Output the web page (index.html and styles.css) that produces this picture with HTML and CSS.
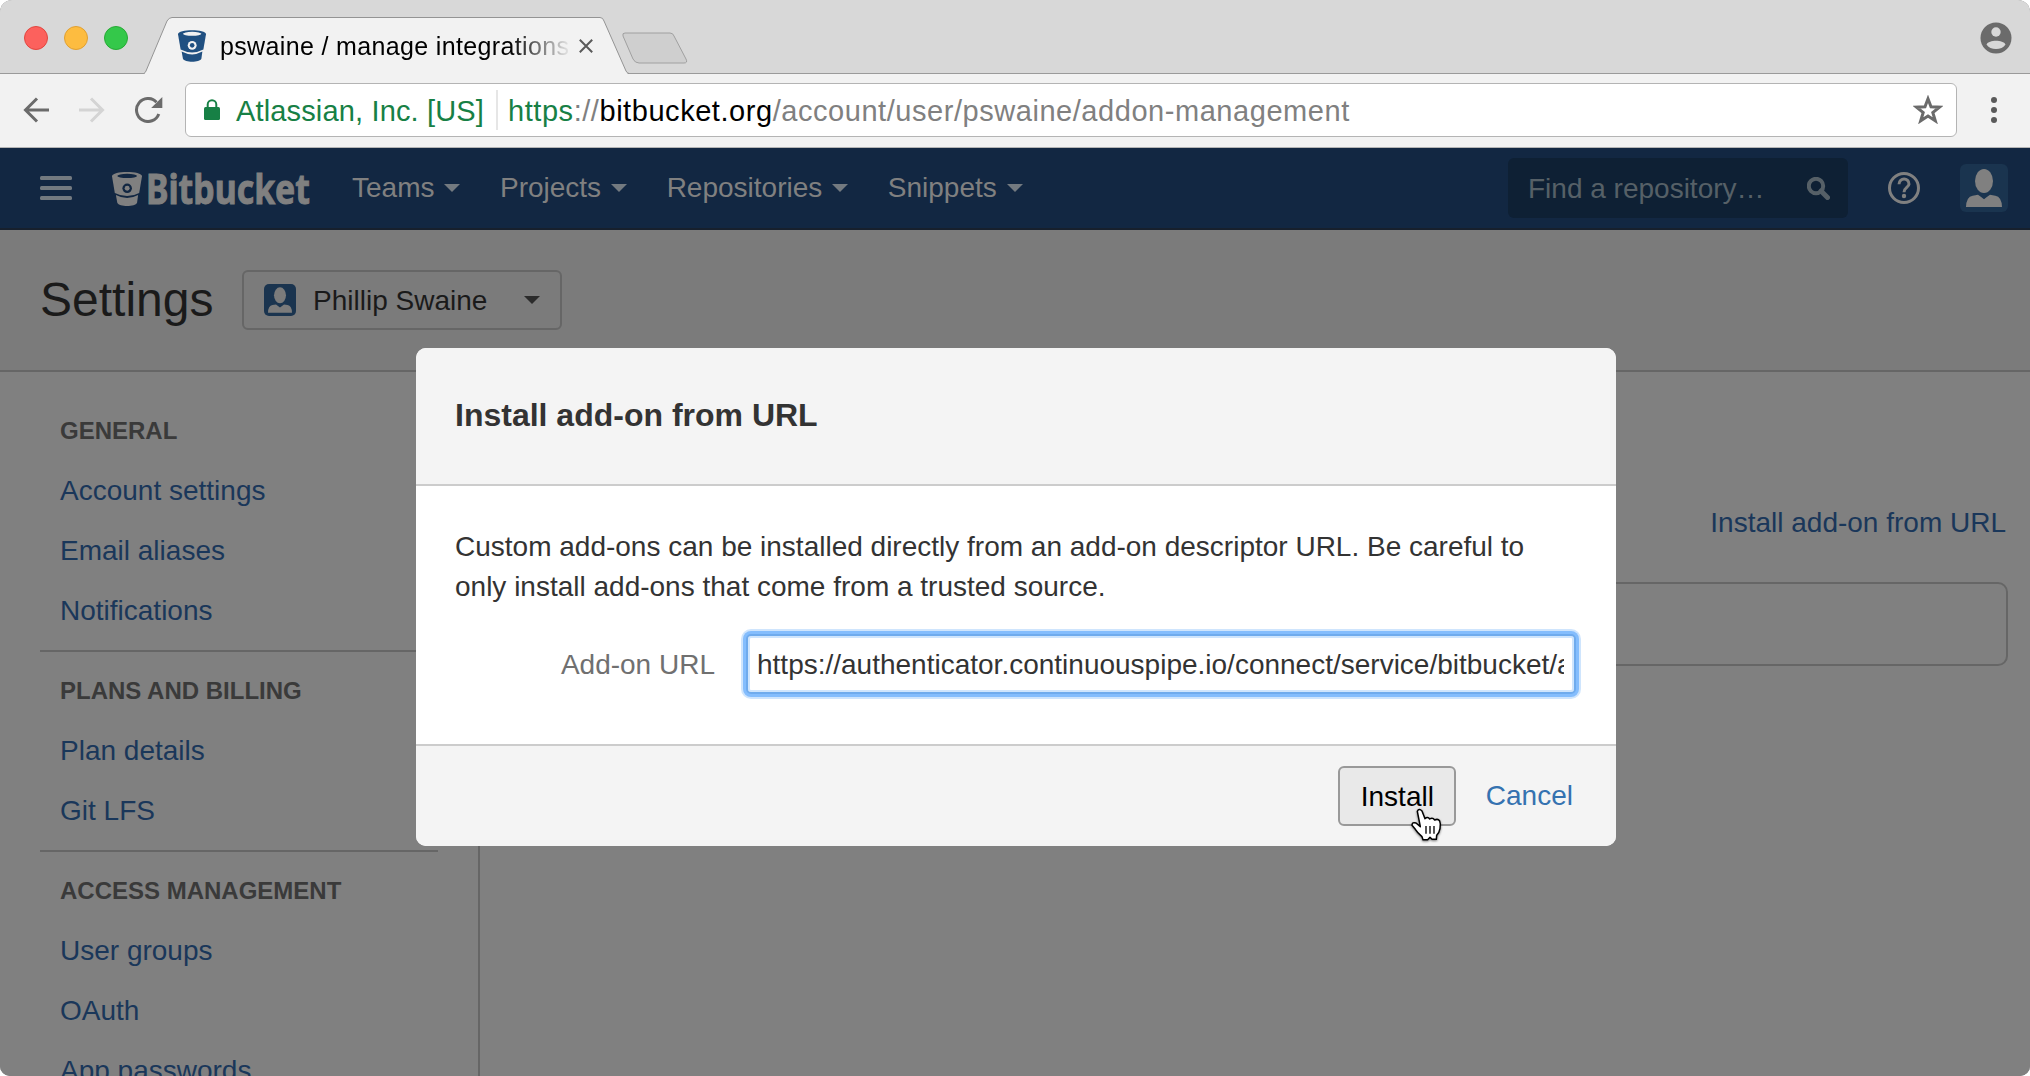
FILE: index.html
```html
<!DOCTYPE html>
<html lang="en">
<head>
<meta charset="utf-8">
<title>pswaine / manage integrations</title>
<link rel="stylesheet" href="styles.css">
</head>
<body>
<svg class="defs" aria-hidden="true">
  <symbol id="bucket" viewBox="0 0 85 96">
    <path fill="currentColor" d="M0 12C0-4 85-4 85 12L77 59Q43 77 8 59Z"/>
    <path fill="currentColor" d="M11 65Q43 82 74 65L71 87C66 99 20 99 15 87Z"/>
    <ellipse class="hole" cx="43" cy="11" rx="28" ry="6"/>
    <circle class="hole" cx="43" cy="46" r="13.5"/>
    <circle fill="currentColor" cx="43" cy="46" r="7"/>
  </symbol>
  <symbol id="person" viewBox="0 0 144 144">
    <ellipse fill="currentColor" cx="72" cy="51" rx="27" ry="36"/>
    <path fill="currentColor" d="M18 129Q19 98 38 95L54 92Q63 98 72 106Q81 98 90 92L106 95Q125 98 126 129Z"/>
  </symbol>
</svg>
<div class="window">
  <header class="tabstrip">
    <div class="lights"><i class="light red"></i><i class="light yellow"></i><i class="light green"></i></div>
    <div class="tab">
      <svg class="tab-shape" width="486" height="58" viewBox="0 0 486 58"><path class="tab-fill" d="M0 57Q1 56 2 54L23 4Q25 .5 28 .5H456Q459 .5 460 4L482 54Q483 56 484 57V58H0Z"/><path class="tab-line" d="M0 56.5Q1 56 2 54L23 4Q25 .5 28 .5H456Q459 .5 460 4L482 54Q483 56 485 56.5"/></svg>
      <svg class="favicon"><use href="#bucket"/></svg>
      <span class="tab-title">pswaine / manage integrations</span>
      <svg class="tab-close" width="14" height="14" viewBox="0 0 14 14"><path d="M.8.8 13.2 13.2M13.2.8.8 13.2"/></svg>
    </div>
    <svg class="new-tab" width="68" height="33" viewBox="0 0 68 33"><path d="M4 1H49Q52 1 53 4L65 27Q67 31 63 31H18Q14 31 12 27L2 4Q1 1 4 1Z"/></svg>
    <svg class="profile" width="32" height="32" viewBox="0 0 32 32"><circle cx="16" cy="16" r="15.5" fill="#6b6b6b"/><circle cx="16" cy="10" r="4.7" fill="#d8d8d8"/><path d="M6.5 22.5C9 17.5 23 17.5 25.5 22.5C22 28.5 10 28.5 6.5 22.5Z" fill="#d8d8d8"/></svg>
  </header>

  <div class="toolbar">
    <svg class="tool" width="26" height="26" viewBox="0 0 26 26"><path d="M26 13H3M14 1.5 2.5 13 14 24.5" stroke="#6b6b6b"/></svg>
    <svg class="tool" width="26" height="26" viewBox="0 0 26 26"><path d="M0 13H23M12 1.5 23.5 13 12 24.5" stroke="#d4d4d4"/></svg>
    <svg class="tool reload" width="28" height="26" viewBox="0 0 28 26"><path d="M23.8 17A11.5 11.5 0 1 1 21.5 5.2" stroke="#6b6b6b"/><path d="M27.3 0V11H16.2Z" fill="#6b6b6b"/></svg>
    <div class="omnibox">
      <svg class="lock" width="16" height="21" viewBox="0 0 16 21"><rect y="8" width="16" height="13" rx="1.5" fill="#178045"/><path d="M3.7 9V5.5a4.3 4.3 0 0 1 8.600 0V9" fill="none" stroke="#178045" stroke-width="2"/></svg>
      <span class="issuer">Atlassian, Inc. [US]</span>
      <span class="url"><b class="scheme">https</b>://<b class="host">bitbucket.org</b>/account/user/pswaine/addon-management</span>
      <svg class="star" width="30" height="29" viewBox="0 0 30 29"><path d="M15 3.8 18 11.8 26.5 12.2 19.8 17.5 22.3 25.8 15 21 7.7 25.8 10.2 17.5 3.5 12.2 12 11.8Z"/></svg>
    </div>
    <svg class="menu" width="6" height="26" viewBox="0 0 6 26"><circle cx="3" cy="3" r="3"/><circle cx="3" cy="13" r="3"/><circle cx="3" cy="23" r="3"/></svg>
  </div>

  <main class="page">
    <nav class="nav">
      <svg class="burger" width="32" height="24" viewBox="0 0 32 24"><rect width="32" height="4" rx="1.5"/><rect y="10" width="32" height="4" rx="1.5"/><rect y="20" width="32" height="4" rx="1.5"/></svg>
      <a class="logo"><svg class="logo-mark"><use href="#bucket"/></svg><svg class="logo-word" width="164" height="60" viewBox="0 0 164 60"><text x="-2" y="46" textLength="164" lengthAdjust="spacingAndGlyphs">Bitbucket</text></svg></a>
      <ul class="nav-links">
        <li>Teams<i class="caret"></i></li>
        <li>Projects<i class="caret"></i></li>
        <li>Repositories<i class="caret"></i></li>
        <li>Snippets<i class="caret"></i></li>
      </ul>
      <div class="search"><span>Find a repository…</span><svg width="23" height="23" viewBox="0 0 23 23"><circle cx="9" cy="9" r="7.2"/><path d="M14 14 20.5 20.5"/></svg></div>
      <svg class="help" width="32" height="32" viewBox="0 0 32 32"><circle cx="16" cy="16" r="14.5"/><path d="M11 12.2C11 5.3 21.3 5.5 21 12.2C20.7 15.5 16 15.7 16 20.2"/><circle class="dot" cx="16" cy="24" r="2.2"/></svg>
      <svg class="avatar"><use href="#person"/></svg>
    </nav>

    <div class="page-head">
      <h1>Settings</h1>
      <div class="account"><svg class="account-icon"><use href="#person"/></svg><span>Phillip Swaine</span><i class="caret"></i></div>
    </div>

    <div class="columns">
      <aside class="sidebar">
        <section><h2>GENERAL</h2><a>Account settings</a><a>Email aliases</a><a>Notifications</a></section>
        <section><h2>PLANS AND BILLING</h2><a>Plan details</a><a>Git LFS</a></section>
        <section><h2>ACCESS MANAGEMENT</h2><a>User groups</a><a>OAuth</a><a>App passwords</a></section>
      </aside>
      <div class="content">
        <a class="install-link">Install add-on from URL</a>
        <div class="panel"></div>
      </div>
    </div>
  </main>

  <div class="dialog">
    <h2 class="dialog-title">Install add-on from URL</h2>
    <div class="dialog-body">
      <p>Custom add-ons can be installed directly from an add-on descriptor URL. Be careful to only install add-ons that come from a trusted source.</p>
      <div class="field"><label for="addon-url">Add-on URL</label><input id="addon-url" type="text" value="https://authenticator.continuouspipe.io/connect/service/bitbucket/addon"></div>
    </div>
    <div class="dialog-foot"><button type="button">Install</button><a>Cancel</a></div>
  </div>

  <svg class="cursor" width="50" height="50" viewBox="0 0 150 150">
    <path class="hand" d="M52 34Q57 24 66 33L75 56Q83 48 89 57Q98 51 104 60Q114 55 119 63Q123 72 120 86Q118 98 110 106L109 118H96L90 112L83 119H69L66 110Q52 98 46 88L36 76Q36 65 48 69L61 80Z"/>
    <path class="creases" d="M78 78V101M90 78V101M102 78V101"/>
  </svg>
</div>
</body>
</html>
```
FILE: styles.css
```css
* { box-sizing: border-box; }
body { margin: 0; background: #fff; font-family: "Liberation Sans", Arial, sans-serif; font-size: 28px; }
h1, h2, p, ul { margin: 0; padding: 0; }
svg { display: block; flex: none; }
.defs { position: absolute; width: 0; height: 0; }
.hole { fill: var(--hole); }

.window { position: relative; width: 2030px; height: 1076px; display: flex; flex-direction: column; overflow: hidden; border-radius: 12px 12px 10px 10px; background: #808080; }

/* Browser chrome */
.tabstrip { height: 74px; flex: none; display: flex; align-items: flex-start; background: #d8d8d8; box-shadow: inset 0 -1px #9a9a9a; }
.lights { display: flex; gap: 16px; padding: 26px 0 0 24px; width: 144px; }
.light { width: 24px; height: 24px; border-radius: 50%; border: 1px solid; }
.red { background: #fc615d; border-color: #e2463f; }
.yellow { background: #fdbc40; border-color: #e0a032; }
.green { background: #34c84a; border-color: #27aa35; }
.tab { position: relative; width: 486px; height: 58px; margin-top: 17px; padding: 0 0 14px 34px; display: flex; align-items: center; }
.tab-shape { position: absolute; left: 0; top: 0; }
.tab-fill { fill: #f2f2f2; }
.tab-line { fill: none; stroke: #949494; }
.favicon { position: relative; width: 28px; height: 32px; margin-top: 14px; color: #205081; --hole: #f2f2f2; }
.tab-title { position: relative; width: 352px; margin: 13px 0 0 14px; white-space: nowrap; overflow: hidden; font-size: 25px; line-height: 32px; letter-spacing: .35px; -webkit-mask-image: linear-gradient(90deg, #000 290px, transparent 352px); mask-image: linear-gradient(90deg, #000 290px, transparent 352px); }
.tab-close { position: relative; margin: 14px 0 0 7px; stroke: #5a5a5a; stroke-width: 2; }
.new-tab { margin: 32px auto 0 -9px; fill: #cfcfcf; stroke: #a0a0a0; }
.profile { margin: 22px 18px 0 0; }

.toolbar { height: 74px; flex: none; display: flex; align-items: center; padding: 0 33px 2px 23px; background: #f2f2f2; border-bottom: 1px solid #b5b5b5; }
.tool { fill: none; stroke-width: 3; margin-right: 30px; }
.reload { margin-right: 22px; }
.omnibox { flex: 1; height: 54px; margin-right: 34px; padding: 0 13px 0 18px; display: flex; align-items: center; background: #fff; border: 1px solid #b4b4b4; border-radius: 6px; font-size: 29px; white-space: nowrap; }
.lock { margin-bottom: 1px; }
.issuer { width: 262px; height: 40px; margin-left: 16px; line-height: 42px; letter-spacing: .15px; color: #178045; border-right: 2px solid #e6e6e6; }
.url { height: 40px; margin-left: 10px; line-height: 42px; letter-spacing: .55px; color: #808080; }
.url b { font-weight: 400; }
.url .scheme { color: #178045; }
.url .host { color: #000; }
.star { margin-left: auto; fill: none; stroke: #6b6b6b; stroke-width: 3; }
.menu { fill: #5a5a5a; }

/* Bitbucket page */
.page { flex: 1; min-height: 0; overflow: hidden; color: #1a1a1a; }
.nav { height: 82px; display: flex; align-items: center; padding: 0 22px 2px 40px; background: #122742; box-shadow: inset 0 -2px #17202d; color: #808080; }
.burger { fill: #737a80; }
.logo { display: flex; align-items: center; margin-left: 40px; --hole: #122742; }
.logo-mark { width: 30px; height: 34px; margin-top: 2px; }
.logo-word { margin-left: 6px; font: bold 42px "Noto Sans", sans-serif; fill: #808080; stroke: #808080; }
.nav-links { display: flex; gap: 39.500px; margin-left: 40px; list-style: none; }
.nav-links li { display: flex; align-items: center; line-height: 42px; }
.caret { width: 0; height: 0; border: 8px solid transparent; border-top-color: currentColor; border-bottom: 0; }
.nav .caret { margin-left: 10px; color: #737a80; }
.search { width: 340px; height: 60px; margin-left: auto; padding: 0 18px 0 20px; display: flex; align-items: center; justify-content: space-between; border-radius: 6px; background: #0e2034; color: #566067; }
.search span { padding-top: 2px; }
.search svg { fill: none; stroke: #566067; stroke-width: 4; }
.search path { stroke-width: 5; stroke-linecap: round; }
.help { margin-left: 40px; fill: none; stroke: #808080; stroke-width: 3; }
.help .dot { fill: #808080; stroke: none; }
.avatar { width: 48px; height: 48px; margin-left: 40px; border-radius: 6px; background: #1a344f; color: #808080; }

.page-head { height: 142px; display: flex; align-items: center; padding-left: 40px; background: #7b7b7b; border-bottom: 2px solid #666; }
.page-head h1 { width: 202px; font-size: 48px; font-weight: 400; line-height: 60px; }
.account { width: 320px; height: 60px; padding: 0 20px; display: flex; align-items: center; border: 2px solid #666; border-radius: 6px; }
.account-icon { width: 32px; height: 32px; border-radius: 5px; background: #1a344f; color: #7b7b7b; }
.account span { margin-left: 17px; padding-top: 2px; line-height: 54px; }
.account .caret { margin-left: auto; color: #2b2b2b; }

.columns { display: flex; height: 704px; background: #808080; }
.sidebar { width: 480px; padding: 20px 40px 0; border-right: 2px solid #666; }
.sidebar section { padding: 8px 0 10px 20px; border-bottom: 2px solid #666; }
.sidebar h2 { height: 60px; padding-top: 1px; font-size: 24px; line-height: 60px; color: #3a3a3a; }
.sidebar a { display: block; height: 60px; line-height: 62px; color: #1a375a; white-space: nowrap; }
.content { flex: 1; padding: 130px 22px 0 40px; display: flex; flex-direction: column; }
.install-link { align-self: flex-end; height: 40px; margin-right: 2px; line-height: 42px; color: #1a375a; }
.panel { height: 84px; margin-top: 40px; border: 2px solid #666; border-radius: 10px; }

/* Dialog */
.dialog { position: absolute; left: 416px; top: 348px; width: 1200px; height: 498px; display: flex; flex-direction: column; overflow: hidden; border-radius: 10px; background: #fff; color: #333; }
.dialog-title { height: 138px; padding-left: 39px; font-size: 32px; line-height: 134px; background: #f4f4f4; border-bottom: 2px solid #ccc; }
.dialog-body { flex: 1; padding: 41px 39px 0; }
.dialog-body p { line-height: 40px; }
.field { margin-top: 27px; display: flex; align-items: center; }
.field label { width: 260px; padding-top: 1px; text-align: right; color: #707070; }
.field input { width: 830px; height: 60px; margin-left: 31px; padding: 1px 10px 0 9px; font: inherit; color: #333; border: 2px solid #6fabed; border-radius: 5px; outline: 0; background: #fff; box-shadow: inset 0 0 0 2px #cfe5fd, 0 0 0 3px #84bdfd, 0 0 0 5px #cfe5fd; }
.dialog-foot { height: 102px; padding: 0 43px; display: flex; align-items: center; justify-content: flex-end; gap: 30px; background: #f4f4f4; border-top: 2px solid #ccc; }
.dialog-foot button { width: 118px; height: 60px; padding: 1px 0 0 1px; font: inherit; color: #000; background: #e9e9e9; border: 2px solid #999; border-radius: 6px; }
.dialog-foot a { color: #3572b0; }

.cursor { position: absolute; left: 1400px; top: 800px; filter: drop-shadow(0 1px 1px rgba(0, 0, 0, .5)); }
.hand { fill: #fff; stroke: #000; stroke-width: 4.5; stroke-linejoin: round; }
.creases { stroke: #000; stroke-width: 4; }
```
